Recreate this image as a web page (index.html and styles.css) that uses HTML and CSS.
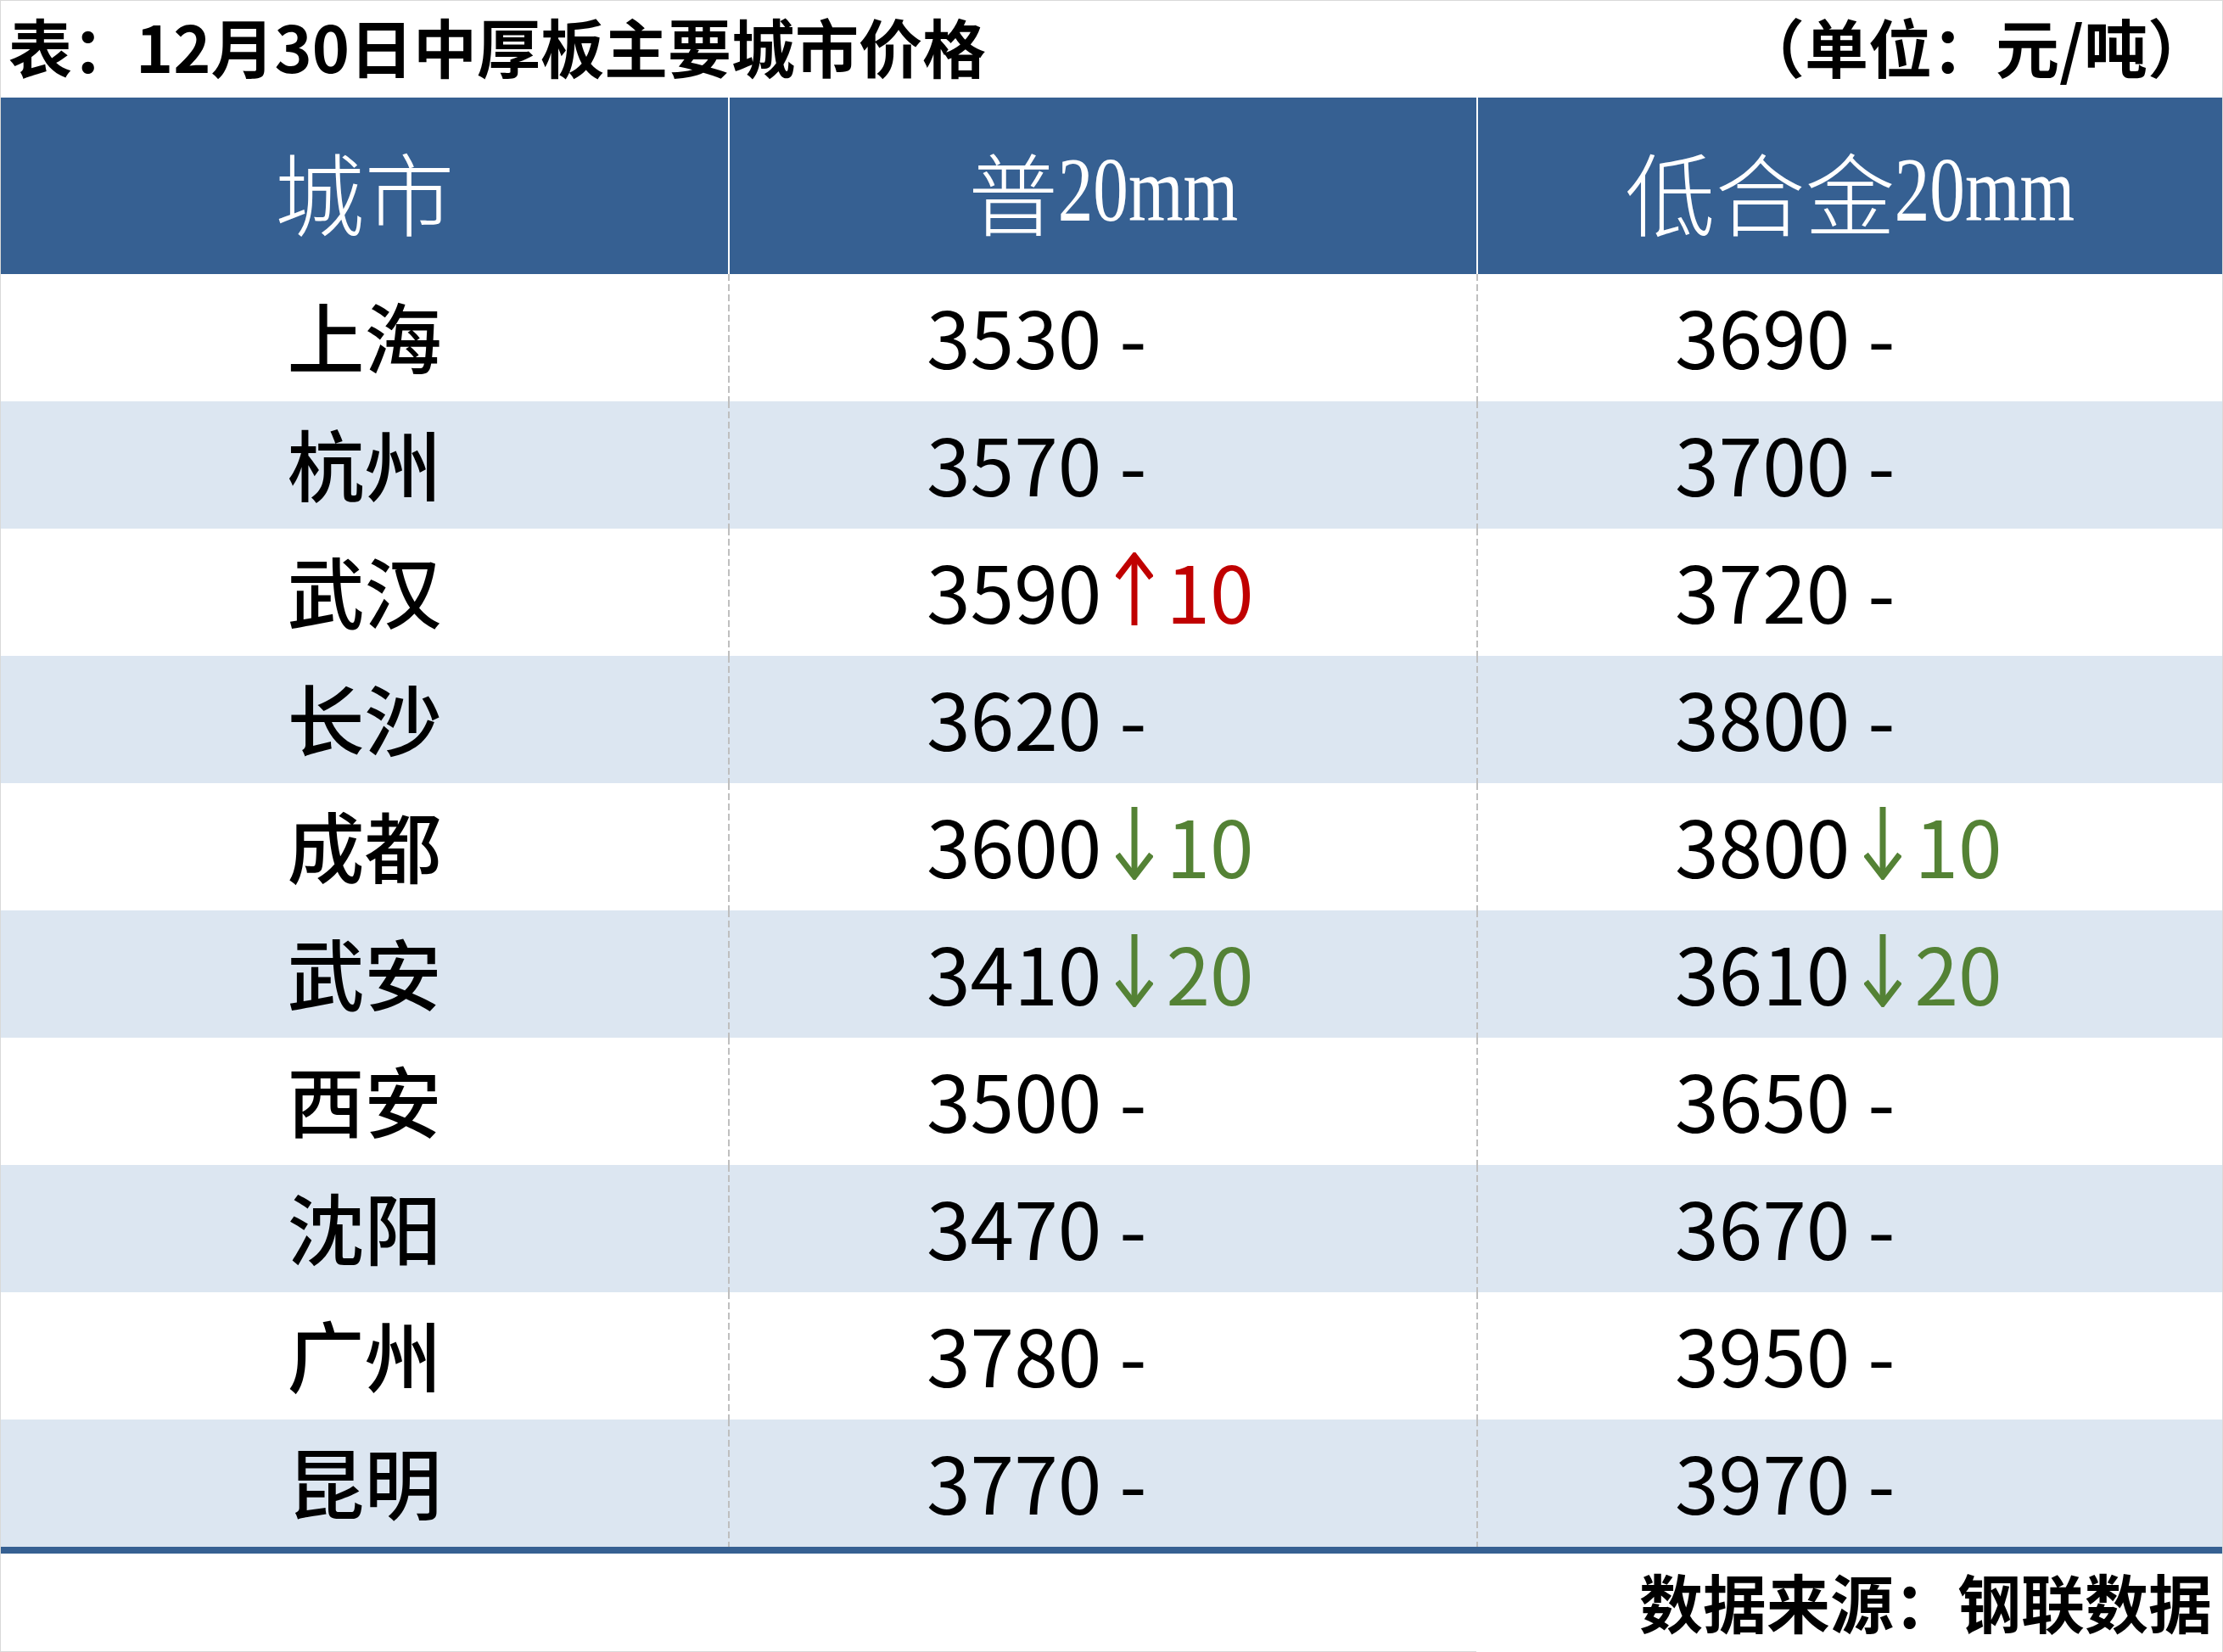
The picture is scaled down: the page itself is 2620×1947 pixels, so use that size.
FILE: index.html
```html
<!DOCTYPE html>
<html lang="zh-CN">
<head>
<meta charset="utf-8">
<title>12月30日中厚板主要城市价格</title>
<link rel="stylesheet" href="styles.css">
</head>
<body>
<div class="sheet">
  <div class="titlebar">
    <div class="title">表：12月30日中厚板主要城市价格</div>
    <div class="unit">（单位：元/吨）</div>
  </div>
  <div class="table">
    <div class="row head">
      <div class="cell c1">城市</div>
      <div class="cell c2">普<span class="lat">20mm</span></div>
      <div class="cell c3">低合金<span class="lat">20mm</span></div>
    </div>
    <div class="row">
      <div class="cell c1">上海</div>
      <div class="cell c2 num">3530 -</div>
      <div class="cell c3 num">3690 -</div>
    </div>
    <div class="row alt">
      <div class="cell c1">杭州</div>
      <div class="cell c2 num">3570 -</div>
      <div class="cell c3 num">3700 -</div>
    </div>
    <div class="row">
      <div class="cell c1">武汉</div>
      <div class="cell c2 num">3590<span class="chg up"><svg class="arrow" viewBox="0 0 44 86"><line x1="22" y1="4" x2="22" y2="86"/><polyline points="2,30 22,4 42,30"/></svg>10</span></div>
      <div class="cell c3 num">3720 -</div>
    </div>
    <div class="row alt">
      <div class="cell c1">长沙</div>
      <div class="cell c2 num">3620 -</div>
      <div class="cell c3 num">3800 -</div>
    </div>
    <div class="row">
      <div class="cell c1">成都</div>
      <div class="cell c2 num">3600<span class="chg down"><svg class="arrow" viewBox="0 0 44 86"><line x1="22" y1="0" x2="22" y2="82"/><polyline points="2,56 22,82 42,56"/></svg>10</span></div>
      <div class="cell c3 num">3800<span class="chg down"><svg class="arrow" viewBox="0 0 44 86"><line x1="22" y1="0" x2="22" y2="82"/><polyline points="2,56 22,82 42,56"/></svg>10</span></div>
    </div>
    <div class="row alt">
      <div class="cell c1">武安</div>
      <div class="cell c2 num">3410<span class="chg down"><svg class="arrow" viewBox="0 0 44 86"><line x1="22" y1="0" x2="22" y2="82"/><polyline points="2,56 22,82 42,56"/></svg>20</span></div>
      <div class="cell c3 num">3610<span class="chg down"><svg class="arrow" viewBox="0 0 44 86"><line x1="22" y1="0" x2="22" y2="82"/><polyline points="2,56 22,82 42,56"/></svg>20</span></div>
    </div>
    <div class="row">
      <div class="cell c1">西安</div>
      <div class="cell c2 num">3500 -</div>
      <div class="cell c3 num">3650 -</div>
    </div>
    <div class="row alt">
      <div class="cell c1">沈阳</div>
      <div class="cell c2 num">3470 -</div>
      <div class="cell c3 num">3670 -</div>
    </div>
    <div class="row">
      <div class="cell c1">广州</div>
      <div class="cell c2 num">3780 -</div>
      <div class="cell c3 num">3950 -</div>
    </div>
    <div class="row alt last">
      <div class="cell c1">昆明</div>
      <div class="cell c2 num">3770 -</div>
      <div class="cell c3 num">3970 -</div>
    </div>
  </div>
  <div class="footer">
    <div class="fgap"></div>
    <div class="ftext">数据来源：钢联数据</div>
  </div>
</div>
</body>
</html>
```

FILE: styles.css
```css
html, body {
  margin: 0;
  padding: 0;
  background: #ffffff;
}

body {
  width: 2620px;
  height: 1947px;
  overflow: hidden;
  font-family: "Noto Sans CJK SC", "Noto Sans", sans-serif;
  color: #000000;
}

.sheet {
  box-sizing: border-box;
  width: 2620px;
  height: 1947px;
  border-top: 1px solid #d9d9d9;
  border-left: 1px solid #d9d9d9;
  border-right: 1px solid #d9d9d9;
  display: flex;
  flex-direction: column;
}

.titlebar {
  box-sizing: border-box;
  height: 114px;
  display: flex;
  align-items: center;
  justify-content: space-between;
  padding: 0 13px 10px 9px;
  font-size: 75px;
  font-weight: 700;
  line-height: 1;
}

.title,
.unit {
  white-space: nowrap;
}

.table {
  display: flex;
  flex-direction: column;
}

.row {
  display: grid;
  grid-template-columns: 857px 882px 1fr;
  height: 150px;
  background: #ffffff;
}

.row.alt {
  background: #dce6f1;
}

.row.head {
  height: 208px;
  background: #366092;
  color: #ffffff;
}

.row.last {
  border-bottom: 8px solid #366092;
}

.cell {
  display: flex;
  align-items: center;
  box-sizing: border-box;
  white-space: nowrap;
  padding-bottom: 8px;
}

.c2,
.c3 {
  background: linear-gradient(to bottom, #bfbfbf 0, #bfbfbf 8px, transparent 8px, transparent 12px) left top / 2px 12px repeat-y;
}

.row.head .c2,
.row.head .c3 {
  background: none;
  border-left: 2px solid #ffffff;
}

.row.head .cell {
  justify-content: center;
  font-size: 106px;
  font-weight: 300;
  line-height: 1;
  padding-top: 10px;
  padding-bottom: 0;
}

.lat {
  display: inline-block;
  font-family: "Liberation Serif", serif;
  font-size: 108px;
  font-weight: 400;
  transform: scaleX(0.77);
  margin: 0 -32px;
}

.c1 {
  justify-content: center;
  font-size: 91px;
  font-weight: 500;
  line-height: 1;
}

.num {
  padding-left: 234px;
  font-size: 93px;
  font-weight: 400;
  line-height: 1;
}

.chg {
  display: inline-flex;
  align-items: baseline;
}

.chg.up {
  color: #c00000;
}

.chg.down {
  color: #548235;
}

.arrow {
  width: 44px;
  height: 86px;
  margin: 0 15px 0 17px;
  align-self: center;
  fill: none;
  stroke: currentColor;
  stroke-width: 7;
  stroke-linejoin: miter;
}

.footer {
  flex: 1;
  display: flex;
  align-items: stretch;
}

.fgap {
  width: 1739px;
  border-bottom: 1px solid #d9d9d9;
}

.ftext {
  flex: 1;
  display: flex;
  align-items: center;
  justify-content: flex-end;
  padding-right: 12px;
  padding-bottom: 6px;
  font-size: 75px;
  font-weight: 700;
  line-height: 1;
  white-space: nowrap;
}
```
